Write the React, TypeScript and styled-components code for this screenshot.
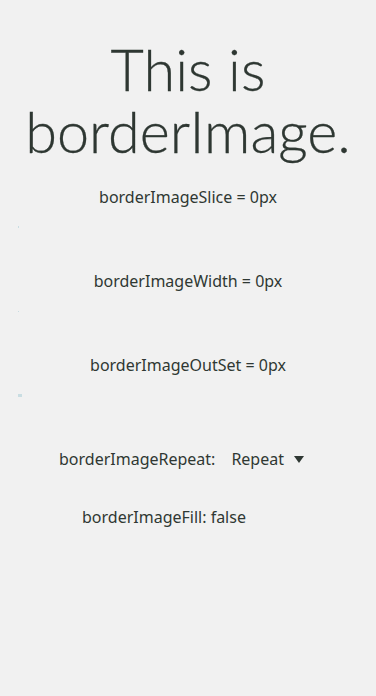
import React from "react";
import styled, { createGlobalStyle } from "styled-components";

const Global = createGlobalStyle`
  html, body { margin: 0; padding: 0; background: #f1f1f1; }
  body { font-family: "Noto Sans", "Liberation Sans", sans-serif; color: #2f3833; }
`;

const Page = styled.div`
  width: 376px;
  height: 696px;
  background: #f1f1f1;
  display: flex;
  flex-direction: column;
  align-items: stretch;
  overflow: hidden;
`;

const Title = styled.h1`
  margin: 38px 0 0 0;
  font-family: "Lato", "Noto Sans", sans-serif;
  font-size: 57.6px;
  font-weight: 300;
  -webkit-text-stroke: 0.3px #2e3732;
  line-height: 62px;
  text-align: center;
  color: #2e3732;
`;

const Spacer = styled.div<{ $h: number }>`
  height: ${(p) => p.$h}px;
  flex: none;
`;

const Section = styled.div`
  display: flex;
  flex-direction: column;
  height: 84px;
`;

const Label = styled.div`
  height: 24px;
  line-height: 24px;
  font-size: 16px;
  text-align: center;
  color: #2f3833;
`;

const SliderStub = styled.div<{ $w: number; $h: number }>`
  margin: ${(p) => 18 - p.$h / 2}px 0 0 18px;
  width: ${(p) => p.$w}px;
  height: ${(p) => p.$h}px;
  background: #c9dde2;
`;

const Row = styled.div<{ $pl: number }>`
  display: flex;
  align-items: center;
  height: 24px;
  padding-left: ${(p) => p.$pl}px;
  font-size: 16px;
  color: #2f3833;
`;

const SelectBox = styled.div`
  display: flex;
  align-items: center;
  margin-left: 16px;
  gap: 10px;
`;

export default function App() {
  return (
    <Page>
      <Global />
      <Title>This is borderImage.</Title>
      <Spacer $h={23} />
      <Section>
        <Label>borderImageSlice = 0px</Label>
        <SliderStub $w={1} $h={2} />
      </Section>
      <Section>
        <Label>borderImageWidth = 0px</Label>
        <SliderStub $w={1} $h={1} />
      </Section>
      <Section>
        <Label>borderImageOutSet = 0px</Label>
        <SliderStub $w={4} $h={3} />
      </Section>
      <Spacer $h={10} />
      <Row $pl={59}>
        borderImageRepeat:
        <SelectBox>
          <span>Repeat</span>
          <svg width="10" height="7" viewBox="0 0 10 7">
            <path d="M0 0 H10 L5 7 Z" fill="#2f3833" />
          </svg>
        </SelectBox>
      </Row>
      <Spacer $h={34} />
      <Row $pl={82}>borderImageFill: false</Row>
    </Page>
  );
}
